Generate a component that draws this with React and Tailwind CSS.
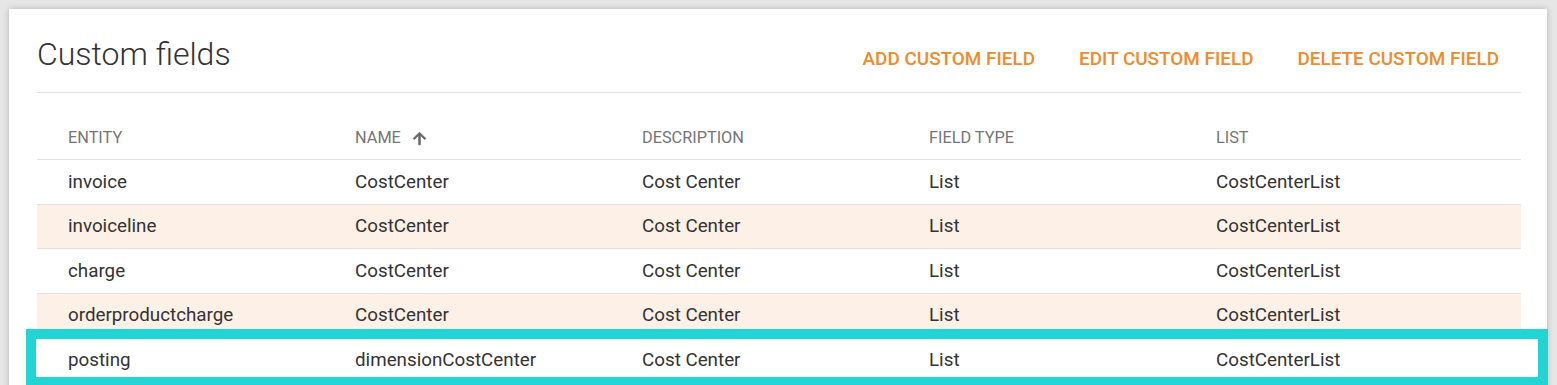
import React from "react";

const rows = [
  { entity: "invoice", name: "CostCenter", description: "Cost Center", type: "List", list: "CostCenterList" },
  { entity: "invoiceline", name: "CostCenter", description: "Cost Center", type: "List", list: "CostCenterList" },
  { entity: "charge", name: "CostCenter", description: "Cost Center", type: "List", list: "CostCenterList" },
  { entity: "orderproductcharge", name: "CostCenter", description: "Cost Center", type: "List", list: "CostCenterList" },
  { entity: "posting", name: "dimensionCostCenter", description: "Cost Center", type: "List", list: "CostCenterList" },
];

function SortArrow() {
  return (
    <svg className="w-[19px] h-[19px] ml-[9px]" viewBox="0 0 24 24" fill="#666666" stroke="#666666" strokeWidth="1">
      <path d="M4 12l1.41 1.41L11 7.83V20h2V7.83l5.58 5.59L20 12l-8-8-8 8z" />
    </svg>
  );
}

export default function App() {
  return (
    <div
      className="relative h-[385px] overflow-hidden bg-[#e6e6e6] pt-[9px] pl-[9px] pr-[10px]"
      style={{ fontFamily: "Roboto, 'Liberation Sans', sans-serif" }}
    >
      <div className="bg-white shadow-[0_0_6px_rgba(0,0,0,0.22)] pr-[26px] pl-[28px] pb-10 min-h-[420px]">
        {/* header */}
        <div className="flex justify-between h-[84px] border-b border-[#e3e3e3]">
          <h1 className="pt-[26px] text-[32px] leading-[38px] font-light text-[#333333]">
            Custom fields
          </h1>
          <div className="flex pt-[38px]">
            {["ADD CUSTOM FIELD", "EDIT CUSTOM FIELD", "DELETE CUSTOM FIELD"].map((label, i) => (
              <button
                key={i}
                className="h-6 px-[22px] text-[18.9px] leading-6 font-medium text-[#f08a2a]"
              >
                {label}
              </button>
            ))}
          </div>
        </div>

        {/* table */}
        <div className="grid grid-cols-[287px_287px_287px_287px_1fr] h-[67px] items-end pb-[11px] border-b border-[#e0e0e0] text-[16.3px] leading-5 text-[#757575]">
          <div className="pl-[31px]">ENTITY</div>
          <div className="pl-[31px] flex items-center">
            NAME
            <SortArrow />
          </div>
          <div className="pl-[31px]">DESCRIPTION</div>
          <div className="pl-[31px]">FIELD TYPE</div>
          <div className="pl-[31px]">LIST</div>
        </div>
        {rows.map((row, i) => (
          <div
            key={i}
            className={`grid grid-cols-[287px_287px_287px_287px_1fr] h-[44.5px] items-center border-b border-[#e0e0e0] text-[18.8px] text-[#333333] ${i % 2 === 1 ? "bg-[#fdf1e7]" : "bg-white"}`}
          >
            <div className="pl-[31px]">{row.entity}</div>
            <div className="pl-[31px]">{row.name}</div>
            <div className="pl-[31px]">{row.description}</div>
            <div className="pl-[31px]">{row.type}</div>
            <div className="pl-[31px]">{row.list}</div>
          </div>
        ))}
      </div>

      {/* highlight annotation */}
      <div className="absolute left-[26px] top-[329px] w-[1522px] h-[56px] border-[10px] border-b-[8px] border-[#22d5d4]" />
    </div>
  );
}
